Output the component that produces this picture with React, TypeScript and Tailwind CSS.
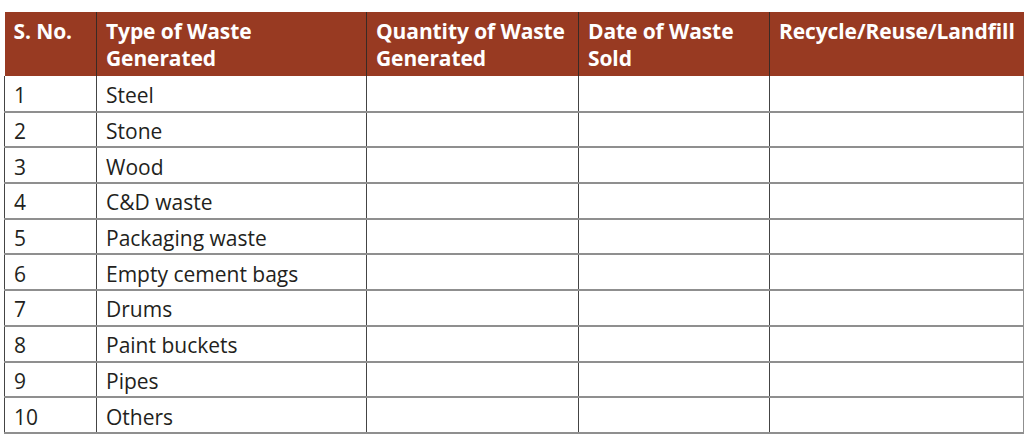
const headers = [
  ["S. No."],
  ["Type of Waste", "Generated"],
  ["Quantity of Waste", "Generated"],
  ["Date of Waste", "Sold"],
  ["Recycle/Reuse/Landfill"],
];

const wastes = [
  "Steel",
  "Stone",
  "Wood",
  "C&D waste",
  "Packaging waste",
  "Empty cement bags",
  "Drums",
  "Paint buckets",
  "Pipes",
  "Others",
];

const widths = ["w-[92px]", "w-[270px]", "w-[212px]", "w-[191px]", "w-[254px]"];

export default function App() {
  return (
    <div className="w-[1024px] h-[440px] bg-white pt-[12px] pl-[4px] font-['Open_Sans',sans-serif]">
      <table className="table-fixed border-collapse w-[1019px]">
        <thead>
          <tr className="bg-[#983a22] text-white h-[64px]">
            {headers.map((h, i) => (
              <th
                key={h[0]}
                className={`${widths[i]} align-top text-left font-bold text-[21px] leading-[27px] tracking-[-0.1px] pl-[9px] pr-0 pt-[6px] whitespace-nowrap ${
                  i > 0 ? "border-l border-[#3a2a25]" : ""
                }`}
              >
                {h.map((line) => (
                  <div key={line}>{line}</div>
                ))}
              </th>
            ))}
          </tr>
        </thead>
        <tbody>
          {wastes.map((w, i) => (
            <tr
              key={w}
              className="h-[35.7px] border-b-2 border-[#8f8f8f] text-[#231f20] text-[21px] leading-[28px]"
            >
              <td className="border-l border-[#444] pl-[9px] pt-[3px] pb-0 align-middle">{i + 1}</td>
              <td className="border-l border-[#444] pl-[9px] pt-[3px] pb-0 align-middle">{w}</td>
              <td className="border-l border-[#444]"></td>
              <td className="border-l border-[#444]"></td>
              <td className="border-l border-r-2 border-l-[#444] border-r-[#8f8f8f]"></td>
            </tr>
          ))}
        </tbody>
      </table>
    </div>
  );
}
